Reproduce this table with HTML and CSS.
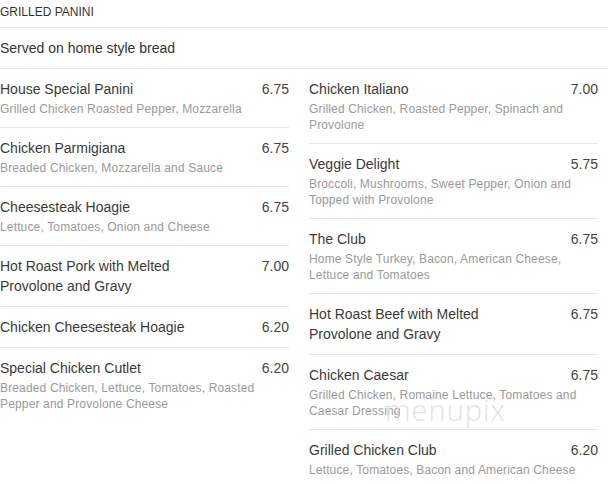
FILE: index.html
```html
<!DOCTYPE html>
<html lang="en">
<head>
    <meta charset="UTF-8">
    <title>Grilled Panini</title>
    <link rel="stylesheet" href="styles.css">
</head>
<body>
<div class="menu">
    <div class="section-title">GRILLED PANINI</div>
    <div class="section-note">Served on home style bread</div>

    <div class="columns">
        <ul class="col">
            <li class="item">
                <div class="row"><span class="name">House Special Panini</span><span class="price">6.75</span></div>
                <div class="desc">Grilled Chicken Roasted Pepper, Mozzarella</div>
            </li>
            <li class="item">
                <div class="row"><span class="name">Chicken Parmigiana</span><span class="price">6.75</span></div>
                <div class="desc">Breaded Chicken, Mozzarella and Sauce</div>
            </li>
            <li class="item">
                <div class="row"><span class="name">Cheesesteak Hoagie</span><span class="price">6.75</span></div>
                <div class="desc">Lettuce, Tomatoes, Onion and Cheese</div>
            </li>
            <li class="item">
                <div class="row"><span class="name">Hot Roast Pork with Melted Provolone and Gravy</span><span class="price">7.00</span></div>
            </li>
            <li class="item">
                <div class="row"><span class="name">Chicken Cheesesteak Hoagie</span><span class="price">6.20</span></div>
            </li>
            <li class="item last">
                <div class="row"><span class="name">Special Chicken Cutlet</span><span class="price">6.20</span></div>
                <div class="desc">Breaded Chicken, Lettuce, Tomatoes, Roasted Pepper and Provolone Cheese</div>
            </li>
        </ul>

        <ul class="col">
            <li class="item">
                <div class="row"><span class="name">Chicken Italiano</span><span class="price">7.00</span></div>
                <div class="desc">Grilled Chicken, Roasted Pepper, Spinach and Provolone</div>
            </li>
            <li class="item">
                <div class="row"><span class="name">Veggie Delight</span><span class="price">5.75</span></div>
                <div class="desc">Broccoli, Mushrooms, Sweet Pepper, Onion and Topped with Provolone</div>
            </li>
            <li class="item">
                <div class="row"><span class="name">The Club</span><span class="price">6.75</span></div>
                <div class="desc">Home Style Turkey, Bacon, American Cheese, Lettuce and Tomatoes</div>
            </li>
            <li class="item">
                <div class="row"><span class="name">Hot Roast Beef with Melted Provolone and Gravy</span><span class="price">6.75</span></div>
            </li>
            <li class="item">
                <div class="row"><span class="name">Chicken Caesar</span><span class="price">6.75</span></div>
                <div class="desc">Grilled Chicken, Romaine Lettuce, Tomatoes and Caesar Dressing</div>
            </li>
            <li class="item last">
                <div class="row"><span class="name">Grilled Chicken Club</span><span class="price">6.20</span></div>
                <div class="desc">Lettuce, Tomatoes, Bacon and American Cheese</div>
            </li>
        </ul>
    </div>

    <div class="watermark">menupix</div>
</div>
</body>
</html>
```

FILE: styles.css
```css
* {
    padding: 0;
    margin: 0;
    box-sizing: border-box;
}

ul {
    list-style: none;
}

body {
    font-family: "Liberation Sans", Arial, sans-serif;
    color: #333;
    background: #fff;
}

.menu {
    width: 608px;
    position: relative;
}

.section-title {
    font-size: 12px;
    line-height: 16px;
    padding: 4px 0 7px;
    color: #333;
    border-bottom: 1px solid #e6e6e6;
}

.section-note {
    font-size: 14px;
    line-height: 20px;
    padding: 10px 0 10px;
    color: #333;
    border-bottom: 1px solid #e6e6e6;
}

.columns {
    display: grid;
    grid-template-columns: 289px 289px;
    column-gap: 20px;
}

.item {
    padding: 10px 0 10px;
    border-bottom: 1px solid #e8e8e8;
}

.item.last {
    border-bottom: none;
}

.row {
    display: flex;
    justify-content: space-between;
    font-size: 14px;
    line-height: 20px;
    color: #3a3a3a;
}

.name {
    width: 220px;
}

.price {
    color: #444;
}

.desc {
    margin-top: 2px;
    font-size: 12px;
    line-height: 16px;
    letter-spacing: 0.15px;
    color: #9a9a9a;
}

.watermark {
    position: absolute;
    left: 385px;
    top: 390px;
    font-family: "Open Sans", sans-serif;
    font-weight: 300;
    font-size: 29px;
    letter-spacing: 1px;
    color: #dcdcdc;
    opacity: 0.8;
}
```
